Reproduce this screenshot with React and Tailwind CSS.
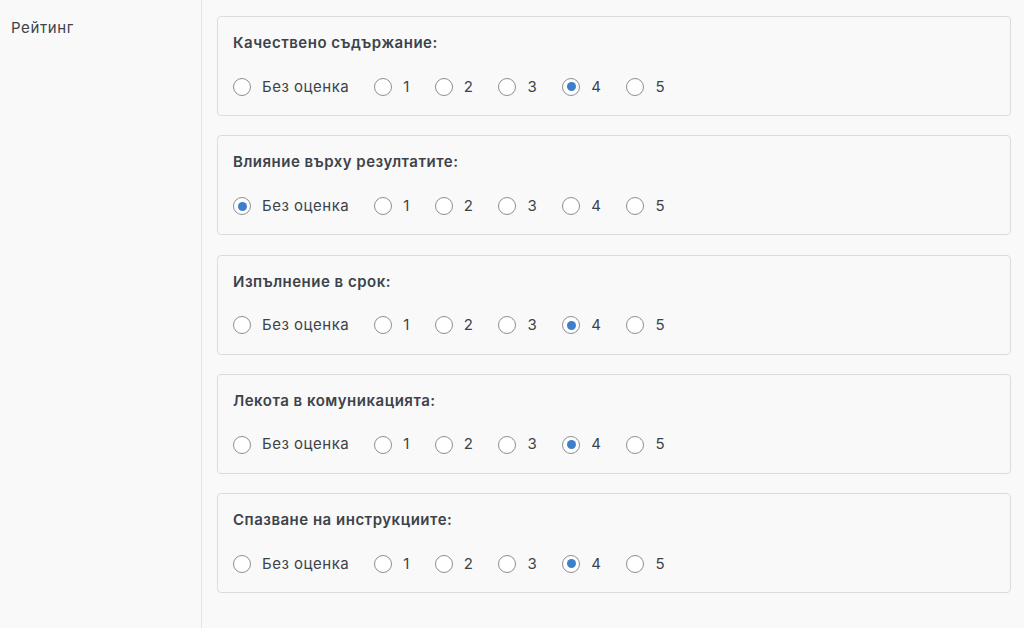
const GROUPS = [
  { title: 'Качествено съдържание:', value: '4' },
  { title: 'Влияние върху резултатите:', value: 'none' },
  { title: 'Изпълнение в срок:', value: '4' },
  { title: 'Лекота в комуникацията:', value: '4' },
  { title: 'Спазване на инструкциите:', value: '4' },
];

const OPTIONS = [
  { id: 'none', label: 'Без оценка' },
  { id: '1', label: '1' },
  { id: '2', label: '2' },
  { id: '3', label: '3' },
  { id: '4', label: '4' },
  { id: '5', label: '5' },
];

function Radio({ checked, label }) {
  return (
    <label className="flex items-center">
      <span className="flex h-[18px] w-[18px] items-center justify-center rounded-full border border-[#8c8f94] bg-white">
        {checked && <span className="h-[9px] w-[9px] rounded-full bg-[#3d7fcb]" />}
      </span>
      <span className="ml-[11px] text-[15px] tracking-[0.5px] text-[#3c434a]">{label}</span>
    </label>
  );
}

export default function App() {
  return (
    <div
      lang="bg"
      className="flex h-[628px] w-[1024px] bg-[#f9f9f9]"
      style={{ fontFamily: 'Inter, "Noto Sans", sans-serif' }}
    >
      <div className="w-[202px] shrink-0 border-r border-[#e4e4e4] pl-[11px] pt-[15px]">
        <span className="text-[15px] tracking-[0.6px] text-[#3c434a]">Рейтинг</span>
      </div>
      <div className="flex w-[809px] flex-col gap-[19.25px] pl-[15px] pt-[16px]">
        {GROUPS.map((g) => (
          <div key={g.title} className="h-[100px] rounded-[4px] border border-[#dcdcde] bg-[#f9f9f9] px-[15px] pt-[15px]">
            <div className="text-[15px] font-semibold tracking-[0.5px] text-[#3c434a]">{g.title}</div>
            <div className="mt-[21px] flex gap-[25px]">
              {OPTIONS.map((o) => (
                <Radio key={o.id} checked={o.id === g.value} label={o.label} />
              ))}
            </div>
          </div>
        ))}
      </div>
    </div>
  );
}
